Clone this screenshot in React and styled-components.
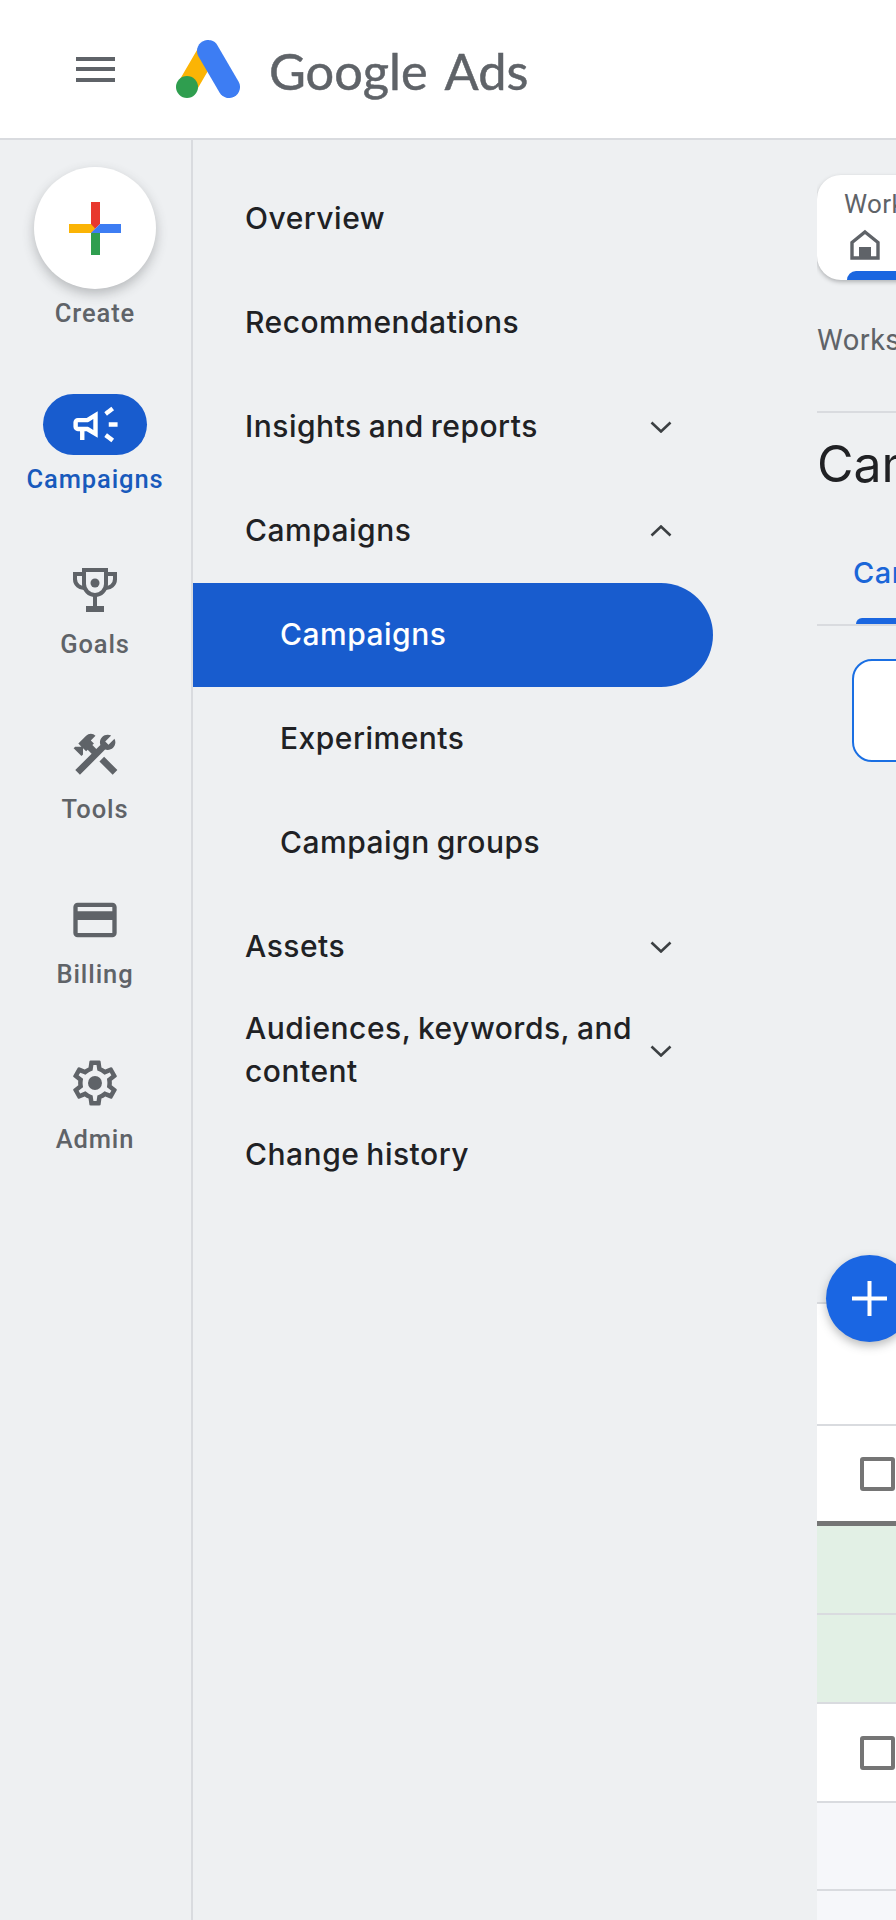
import React from 'react';
import styled, { createGlobalStyle } from 'styled-components';
import { MdConstruction, MdOutlineCreditCard } from 'react-icons/md';

const GlobalStyle = createGlobalStyle`
  html, body {
    margin: 0;
    padding: 0;
    background: #eef0f2;
    font-family: "Inter", "Liberation Sans", sans-serif;
  }
  * {
    box-sizing: border-box;
  }
`;

const Page = styled.div`
  width: 896px;
  height: 1920px;
  overflow: hidden;
  display: flex;
  flex-direction: column;
`;

const Header = styled.header`
  height: 140px;
  flex: none;
  background: #fff;
  border-bottom: 2px solid #d9dbdf;
  display: flex;
  align-items: center;
  padding-left: 76px;
`;

const Burger = styled.div`
  width: 39px;
  height: 25px;
  display: flex;
  flex-direction: column;
  justify-content: space-between;
  margin-right: 61px;

  & > span {
    height: 4px;
    background: #5f6368;
  }
`;

const Wordmark = styled.div`
  margin-left: 29px;
  margin-top: 2px;
  display: flex;
  gap: 17px;
  font-family: "Lato", sans-serif;
  font-size: 50.5px;
  color: #5f6368;
  -webkit-text-stroke: 0.5px #5f6368;
`;

const Body = styled.div`
  flex: 1;
  display: flex;
  min-height: 0;
`;

const Rail = styled.nav`
  width: 193px;
  flex: none;
  border-right: 2px solid #d9dbdf;
  display: flex;
  flex-direction: column;
  align-items: center;
  padding: 27px 1px 0 0;
`;

const CreateButton = styled.div`
  width: 122px;
  height: 122px;
  border-radius: 50%;
  background: #fff;
  box-shadow: 0 5px 12px rgba(60, 64, 67, 0.3);
  display: flex;
  align-items: center;
  justify-content: center;
`;

const RailLabel = styled.div`
  margin-top: 8px;
  height: 32px;
  line-height: 32px;
  font-family: "Roboto", sans-serif;
  font-weight: 500;
  font-size: 25.5px;
  letter-spacing: 0.9px;
  white-space: nowrap;
  color: ${props => (props.$active ? '#185abc' : '#5f6368')};
`;

const RailItem = styled.div`
  height: 165px;
  flex: none;
  display: flex;
  flex-direction: column;
  align-items: center;
  margin-top: ${props => (props.$first ? '65px' : '0')};
`;

const IconSlot = styled.div`
  width: 104px;
  height: 61px;
  border-radius: 31px;
  display: flex;
  align-items: center;
  justify-content: center;
  color: ${props => (props.$active ? '#fff' : '#5f6368')};
  background: ${props => (props.$active ? '#185cce' : 'transparent')};
`;

const Menu = styled.nav`
  width: 624px;
  flex: none;
  padding-top: 27px;
`;

const MenuRow = styled.div`
  width: 520px;
  height: 104px;
  display: flex;
  align-items: center;
  padding-left: ${props => (props.$sub ? '87px' : '52px')};
  padding-right: 41px;
  border-radius: 0 52px 52px 0;
  font-size: 30px;
  font-weight: 500;
  letter-spacing: 0.5px;
  word-spacing: -1.5px;
  line-height: 43px;
  color: ${props => (props.$active ? '#fff' : '#202124')};
  background: ${props => (props.$active ? '#185cce' : 'transparent')};
`;

const MenuText = styled.span`
  flex: 1;
  position: relative;
  top: -1px;
`;

const Chevron = styled.svg`
  width: 22px;
  height: 12px;
  flex: none;
  fill: none;
  stroke: #3c4043;
  stroke-width: 2.6;
  transform: ${props => (props.$up ? 'rotate(180deg)' : 'none')};
`;

const Content = styled.main`
  flex: 1;
  min-width: 0;
  overflow: hidden;
  padding-top: 35px;
`;

const Inner = styled.div`
  width: 700px;
`;

const TabCard = styled.div`
  height: 105px;
  background: #fff;
  border-radius: 24px 0 0 24px;
  box-shadow: 0 2px 4px rgba(60, 64, 67, 0.35);
  padding: 14px 0 0 27px;
  display: flex;
  flex-direction: column;
  overflow: hidden;
`;

const TabCardLabel = styled.div`
  height: 30px;
  line-height: 30px;
  font-family: "Roboto", sans-serif;
  font-size: 26px;
  letter-spacing: 0.4px;
  color: #5f6368;
`;

const HomeIcon = styled.svg`
  width: 30px;
  height: 31px;
  margin: 10px 0 0 6px;
  flex: none;
`;

const TabBarMark = styled.div`
  height: 9px;
  margin: 11px 0 0 3px;
  flex: none;
  background: #1a66e0;
  border-radius: 9px 0 0 0;
`;

const Crumb = styled.div`
  margin-top: 44px;
  height: 32px;
  line-height: 32px;
  font-family: "Roboto", sans-serif;
  font-size: 29px;
  letter-spacing: 0.5px;
  color: #5f6368;
`;

const Rule = styled.div`
  margin-top: 55px;
  height: 2px;
  background: #d9dbdf;
`;

const PageTitle = styled.h1`
  margin: 23px 0 0;
  height: 56px;
  line-height: 56px;
  font-size: 50px;
  font-weight: 400;
  color: #202124;
`;

const Tabs = styled.div`
  margin-top: 65px;
  height: 69px;
  border-bottom: 2px solid #d9dbdf;
  padding-left: 36px;
  display: flex;
  flex-direction: column;
  align-items: flex-start;
`;

const TabLabel = styled.div`
  height: 32px;
  line-height: 32px;
  font-size: 29px;
  font-weight: 500;
  letter-spacing: 0.5px;
  color: #1a66d8;
`;

const TabMark = styled.div`
  margin: 29px 0 0 3px;
  width: 140px;
  height: 6px;
  background: #1a66e0;
  border-radius: 6px 6px 0 0;
`;

const FilterBox = styled.div`
  margin: 33px 0 0 35px;
  width: 400px;
  height: 103px;
  background: #fff;
  border: 2.5px solid #1a6fe3;
  border-radius: 20px;
`;

const Table = styled.div`
  position: relative;
  margin-top: 540px;
  background: #fff;
  border-top: 2px solid #d9dbdf;
`;

const Fab = styled.div`
  position: absolute;
  left: 9px;
  top: -49px;
  width: 87px;
  height: 87px;
  border-radius: 50%;
  background: #1a66e3;
  box-shadow: 0 4px 10px rgba(60, 64, 67, 0.35);
  display: flex;
  align-items: center;
  justify-content: center;
`;

const Row = styled.div`
  height: ${props => props.$height}px;
  background: ${props => props.$bg || '#fff'};
  border-bottom: ${props => props.$rule || 2}px solid ${props => (props.$rule ? '#757575' : '#d9dbdf')};
  display: flex;
  align-items: center;
  padding-left: 43px;
`;

const Checkbox = styled.div`
  width: 35px;
  height: 34px;
  border: 4px solid #757575;
  border-radius: 3px;
`;

const AdminSlot = styled.span`
  display: flex;
  margin-top: -3px;
`;

const railItems = [
  { label: 'Goals', icon: <GoalsIcon /> },
  { label: 'Tools', icon: <MdConstruction size={53} /> },
  { label: 'Billing', icon: <MdOutlineCreditCard size={52} /> },
  { label: 'Admin', icon: <AdminIcon /> },
];

const menuItems = [
  { label: 'Overview' },
  { label: 'Recommendations' },
  { label: 'Insights and reports', chevron: 'down' },
  { label: 'Campaigns', chevron: 'up' },
  { label: 'Campaigns', sub: true, active: true },
  { label: 'Experiments', sub: true },
  { label: 'Campaign groups', sub: true },
  { label: 'Assets', chevron: 'down' },
  { label: 'Audiences, keywords, and content', chevron: 'down' },
  { label: 'Change history' },
];

function AdsLogo() {
  return (
    <svg width="64" height="58" viewBox="0 0 64 58">
      <line x1="32" y1="11" x2="11" y2="47" stroke="#fbb405" strokeWidth="20" strokeLinecap="round" />
      <line x1="32" y1="11" x2="53" y2="47" stroke="#3d7df3" strokeWidth="22" strokeLinecap="round" />
      <circle cx="11" cy="47" r="11" fill="#2f9e4f" />
    </svg>
  );
}

function CreatePlus() {
  return (
    <svg width="52" height="53" viewBox="0 0 52 53">
      <polygon points="22,0 31,0 31,22 22,31" fill="#e8382e" />
      <polygon points="0,22 22,22 26,26.5 22,31 0,31" fill="#fbb405" />
      <polygon points="31,22 52,22 52,31 22,31" fill="#3d7df3" />
      <polygon points="22,31 31,31 31,53 22,53" fill="#2f9e4f" />
    </svg>
  );
}

function CampaignIcon() {
  return (
    <svg width="53" height="53" viewBox="0 0 24 24" fill="currentColor">
      <path d="M18 11v2h4v-2h-4zm-2 6.61c.96.71 2.21 1.65 3.2 2.39.4-.53.8-1.07 1.2-1.6-.99-.74-2.24-1.68-3.2-2.4-.4.54-.8 1.08-1.2 1.61zM20.4 5.6c-.4-.53-.8-1.07-1.2-1.6-.99.74-2.24 1.68-3.2 2.4.4.53.8 1.07 1.2 1.6.96-.72 2.21-1.65 3.2-2.4zM4 9c-1.1 0-2 .9-2 2v2c0 1.1.9 2 2 2h1v4h2v-4h1l5 3V6L8 9H4zm5.03 1.71L11 9.53v4.94l-1.97-1.18-.48-.29H4v-2h4.55l.48-.29z" />
    </svg>
  );
}

function GoalsIcon() {
  return (
    <svg width="44" height="44" viewBox="0 0 44 44" fill="none" stroke="currentColor" strokeWidth="4">
      <path d="M11 2h22v14a11 11 0 0 1-22 0z" />
      <path d="M11 6H2v5a9 9 0 0 0 10 9M33 6h9v5a9 9 0 0 1-10 9" />
      <path d="M22 28v11" />
      <rect x="13" y="38" width="18" height="6" fill="currentColor" stroke="none" />
      <circle cx="22" cy="15" r="4.5" fill="currentColor" stroke="none" />
    </svg>
  );
}

function AdminIcon() {
  return (
    <AdminSlot>
      <svg width="54" height="54" viewBox="0 0 24 24" fill="currentColor">
        <path d="M19.43 12.98c.04-.32.07-.64.07-.98 0-.34-.03-.66-.07-.98l2.11-1.65c.19-.15.24-.42.12-.64l-2-3.46c-.09-.16-.26-.25-.44-.25-.06 0-.12.01-.17.03l-2.49 1c-.52-.4-1.08-.73-1.69-.98l-.38-2.65C14.46 2.18 14.25 2 14 2h-4c-.25 0-.46.18-.49.42l-.38 2.65c-.61.25-1.17.59-1.69.98l-2.49-1c-.06-.02-.12-.03-.18-.03-.17 0-.34.09-.43.25l-2 3.46c-.13.22-.07.49.12.64l2.11 1.65c-.04.32-.07.65-.07.98 0 .33.03.66.07.98l-2.11 1.65c-.19.15-.24.42-.12.64l2 3.46c.09.16.26.25.44.25.06 0 .12-.01.17-.03l2.49-1c.52.4 1.08.73 1.69.98l.38 2.65c.03.24.24.42.49.42h4c.25 0 .46-.18.49-.42l.38-2.65c.61-.25 1.17-.59 1.69-.98l2.49 1c.06.02.12.03.18.03.17 0 .34-.09.43-.25l2-3.46c.12-.22.07-.49-.12-.64l-2.11-1.65zm-1.98-1.71c.04.31.05.52.05.73 0 .21-.02.43-.05.73l-.14 1.13.89.7 1.08.84-.7 1.21-1.27-.51-1.04-.42-.9.68c-.43.32-.84.56-1.25.73l-1.06.43-.16 1.13-.2 1.35h-1.4l-.19-1.35-.16-1.13-1.06-.43c-.43-.18-.83-.41-1.23-.71l-.91-.7-1.06.43-1.27.51-.7-1.21 1.08-.84.89-.7-.14-1.13c-.03-.31-.05-.54-.05-.74s.02-.43.05-.73l.14-1.13-.89-.7-1.08-.84.7-1.21 1.27.51 1.04.42.9-.68c.43-.32.84-.56 1.25-.73l1.06-.43.16-1.13.2-1.35h1.39l.19 1.35.16 1.13 1.06.43c.43.18.83.41 1.23.71l.91.7 1.06-.43 1.27-.51.7 1.21-1.07.85-.89.7.14 1.13z" />
        <circle cx="12" cy="12" r="3.1" />
      </svg>
    </AdminSlot>
  );
}

const App = () => (
  <Page>
    <GlobalStyle />
    <Header>
      <Burger>
        <span />
        <span />
        <span />
      </Burger>
      <AdsLogo />
      <Wordmark>
        <span>Google</span>
        <span>Ads</span>
      </Wordmark>
    </Header>
    <Body>
      <Rail>
        <CreateButton>
          <CreatePlus />
        </CreateButton>
        <RailLabel>Create</RailLabel>
        <RailItem $first>
          <IconSlot $active>
            <CampaignIcon />
          </IconSlot>
          <RailLabel $active>Campaigns</RailLabel>
        </RailItem>
        {railItems.map(item => (
          <RailItem key={item.label}>
            <IconSlot>{item.icon}</IconSlot>
            <RailLabel>{item.label}</RailLabel>
          </RailItem>
        ))}
      </Rail>
      <Menu>
        {menuItems.map(item => (
          <MenuRow key={item.label + item.sub} $sub={item.sub} $active={item.active}>
            <MenuText>{item.label}</MenuText>
            {item.chevron && (
              <Chevron viewBox="0 0 22 12" $up={item.chevron === 'up'}>
                <polyline points="1.5,1.5 11,10.5 20.5,1.5" />
              </Chevron>
            )}
          </MenuRow>
        ))}
      </Menu>
      <Content>
        <Inner>
          <TabCard>
            <TabCardLabel>Workspace</TabCardLabel>
            <HomeIcon viewBox="0 0 30 31">
              <path d="M15 3 28 13.5V29H2V13.5z" fill="none" stroke="#5f6368" strokeWidth="3.4" />
              <rect x="9" y="18" width="12" height="12" fill="#5f6368" />
            </HomeIcon>
            <TabBarMark />
          </TabCard>
          <Crumb>Workspace</Crumb>
          <Rule />
          <PageTitle>Campaigns</PageTitle>
          <Tabs>
            <TabLabel>Campaigns</TabLabel>
            <TabMark />
          </Tabs>
          <FilterBox />
          <Table>
            <Fab>
              <svg width="35" height="35" viewBox="0 0 35 35">
                <path d="M17.5 0v35M0 17.5h35" stroke="#fff" strokeWidth="4" />
              </svg>
            </Fab>
            <Row $height={122} />
            <Row $height={100} $rule={5}>
              <Checkbox />
            </Row>
            <Row $height={89} $bg="#e2f0e5" />
            <Row $height={89} $bg="#e2f0e5" />
            <Row $height={99}>
              <Checkbox />
            </Row>
            <Row $height={88} $bg="#f6f7fa" />
            <Row $height={40} $bg="#f6f7fa" />
          </Table>
        </Inner>
      </Content>
    </Body>
  </Page>
);

export default App;
